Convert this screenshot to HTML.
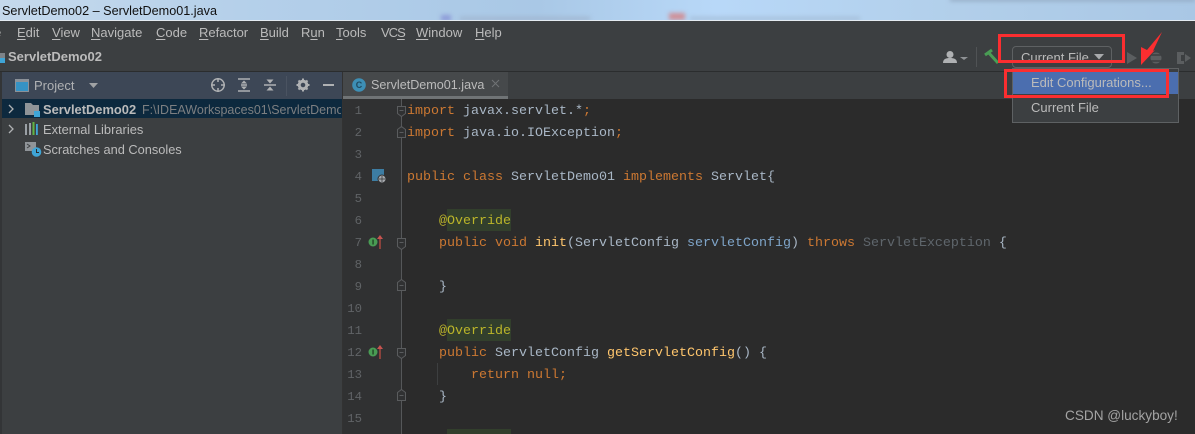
<!DOCTYPE html>
<html><head><meta charset="utf-8">
<style>
html,body{margin:0;padding:0;background:#2b2b2b}
#r{position:relative;width:1195px;height:434px;overflow:hidden;font-family:"Liberation Sans",sans-serif;background:#2b2b2b}
.a{position:absolute}
.bl{filter:blur(2px)}
.t{position:absolute;white-space:pre;line-height:20px}
.m{position:absolute;top:23px;font-size:13px;line-height:20px;color:#bbbbbb;white-space:pre}
.m u{text-underline-offset:2px}
.n{position:absolute;width:28px;left:334px;text-align:right;font:12.3px/22px "Liberation Mono",monospace;color:#606366}
.c{position:absolute;left:407px;font:13.33px/22px "Liberation Mono",monospace;color:#a9b7c6;white-space:pre}
.k{color:#cc7832}.y{color:#ffc66d}.b{color:#7fa5c9}.g{color:#5f666c}
.an{color:#bbb529}
.ah{position:absolute;left:447px;width:64px;height:22px;background:#323f2c}
svg{position:absolute;overflow:visible}
.rb{position:absolute;border:3px solid #fb2e30;box-sizing:border-box}
</style></head><body><div id="r">
<!-- title bar -->
<div class="a" style="left:0;top:0;width:1195px;height:20px;background:linear-gradient(90deg,#c5d9ec 0,#b5d0ea 20%,#a9c8e6 45%,#b8d8f8 60%,#b2cfea 80%,#a9c7e5 100%)"></div>
<div class="a bl" style="left:441px;top:15px;width:10px;height:6px;background:#8d9bd8"></div>
<div class="a bl" style="left:460px;top:17px;width:130px;height:3px;background:#9fb3cc"></div>
<div class="a bl" style="left:669px;top:13px;width:16px;height:7px;background:#cf9097"></div>
<div class="a bl" style="left:690px;top:17px;width:170px;height:3px;background:#a4bcd6"></div>
<div class="a bl" style="left:950px;top:-2px;width:245px;height:3px;background:#8fa5bd"></div>
<div class="t" style="left:2px;top:1px;font-size:12.65px;color:#111;line-height:20px">ServletDemo02 – ServletDemo01.java</div>
<div class="a" style="left:0;top:20px;width:1195px;height:1px;background:#e4ebf1"></div>
<!-- menu + nav -->
<div class="a" style="left:0;top:21px;width:1195px;height:50px;background:#3c3f41"></div>
<div class="m" style="left:-6px">e</div>
<div class="m" style="left:17px"><u>E</u>dit</div>
<div class="m" style="left:52px"><u>V</u>iew</div>
<div class="m" style="left:91px"><u>N</u>avigate</div>
<div class="m" style="left:156px"><u>C</u>ode</div>
<div class="m" style="left:199px"><u>R</u>efactor</div>
<div class="m" style="left:260px"><u>B</u>uild</div>
<div class="m" style="left:301px">R<u>u</u>n</div>
<div class="m" style="left:336px"><u>T</u>ools</div>
<div class="m" style="left:381px;letter-spacing:-1px">VC<u>S</u></div>
<div class="m" style="left:416px"><u>W</u>indow</div>
<div class="m" style="left:475px"><u>H</u>elp</div>
<div class="t" style="left:8px;top:47px;font-size:13px;font-weight:bold;color:#bbbbbb">ServletDemo02</div>
<div class="a" style="left:0;top:53px;width:5px;height:5px;background:#7d8388"></div>
<div class="a" style="left:0;top:58px;width:5px;height:5px;background:#3fa5d6"></div>
<div class="a" style="left:0;top:71px;width:1195px;height:1px;background:#2b2d2e"></div>
<!-- nav toolbar icons -->
<svg style="left:942px;top:50px" width="30" height="16"><circle cx="8" cy="4.500" r="3.500" fill="#afb1b3"/><path d="M1 13c0-4 3-5 7-5s7 1 7 5z" fill="#afb1b3"/><path d="M18 7h8l-4 3z" fill="#8f9295"/></svg>
<div class="a" style="left:976px;top:47px;width:1px;height:20px;background:#505355"></div>
<svg style="left:984px;top:49px" width="18" height="16"><path d="M1 6L8 1M4 3l10 11" stroke="#499c54" stroke-width="3" fill="none"/></svg>
<div class="a" style="left:1012px;top:46px;width:100px;height:22px;box-sizing:border-box;border:1px solid #5e6163;border-radius:4px"></div>
<div class="t" style="left:1021px;top:48px;font-size:13px;color:#bbbbbb">Current File</div>
<svg style="left:1094px;top:54px" width="10" height="6"><path d="M0 0h10l-5 5.500z" fill="#a8aaac"/></svg>
<svg style="left:1126px;top:50px" width="70" height="16"><path d="M1 2l10 6-10 6z" fill="#5b5e60"/><circle cx="30" cy="8" r="5.500" fill="#5b5e60"/><path d="M24 5h12M24 11h12" stroke="#3c3f41" stroke-width="1.500"/><path d="M51 2h7v3h-3v6h3v3h-7z" fill="#5b5e60"/><path d="M59 4l6 4-6 4z" fill="#5b5e60"/></svg>
<!-- left panel -->
<div class="a" style="left:0;top:72px;width:342px;height:362px;background:#3c3f41"></div>
<div class="a" style="left:0;top:72px;width:342px;height:27px;background:#3d4756"></div>
<div class="a" style="left:0;top:72px;width:2px;height:362px;background:#333537"></div>
<svg style="left:15px;top:79px" width="14" height="13"><rect x=".5" y=".5" width="13" height="12" fill="#3592c4" stroke="#8b9198"/><rect x="1" y="1" width="12" height="2" fill="#8b9198"/></svg>
<div class="t" style="left:34px;top:76px;font-size:13px;color:#afb1b3">Project</div>
<svg style="left:89px;top:83px" width="10" height="6"><path d="M0 0h9l-4.500 5z" fill="#a0a2a4"/></svg>
<svg style="left:210px;top:77px" width="126" height="18" fill="none" stroke="#afb1b3">
<circle cx="8" cy="8" r="6.200" stroke-width="1.500"/><path d="M8 1v4M8 11v4M1 8h4M11 8h4" stroke-width="1.500"/>
<path d="M28 2h12M28 14h12M31 8h6" stroke-width="1.500"/><path d="M34 3.500l3 3h-6zM34 12.500l3-3h-6z" fill="#afb1b3" stroke="none"/>
<path d="M54 8h12" stroke-width="1.500"/><path d="M60 6.500l-3.500-4h7zM60 9.500l-3.500 4h7z" fill="#afb1b3" stroke="none"/>
<circle cx="93" cy="8" r="3.800" stroke-width="3"/><path d="M93 1.500v3M93 11.500v3M86.500 8h3M96.500 8h3M88.500 3.500l2 2M95.500 10.500l2 2M97.500 3.500l-2 2M90.500 10.500l-2 2" stroke-width="2"/>
<path d="M113 8h11" stroke-width="2"/></svg>
<div class="a" style="left:286px;top:76px;width:1px;height:20px;background:#4a5361"></div>
<div class="a" style="left:2px;top:99px;width:340px;height:19px;background:#0d293e"></div>
<svg style="left:8px;top:104px" width="8" height="32" fill="none" stroke="#afb1b3" stroke-width="1.300"><path d="M1 1l4 4-4 4M1 21l4 4-4 4"/></svg>
<svg style="left:25px;top:103px" width="16" height="14"><path d="M0 0h6l2 2h6v10H0z" fill="#8f9498"/><rect x="9" y="8" width="6" height="6" fill="#3fa5d6"/></svg>
<div class="t" style="left:43px;top:100px;font-size:12.9px;font-weight:bold;color:#bbbbbb">ServletDemo02</div>
<div class="t" style="left:142px;top:100px;font-size:12.5px;color:#7d7f81;width:199px;overflow:hidden">F:\IDEAWorkspaces01\ServletDemo02</div>
<svg style="left:25px;top:122px" width="15" height="14"><rect x="0" y="2" width="2" height="11" fill="#9aa0a5"/><rect x="4" y="1" width="2" height="12" fill="#9aa0a5"/><rect x="7.500" y="0" width="2" height="13" fill="#62b543"/><rect x="11" y="2" width="1.800" height="11" fill="#40a5d8"/></svg>
<div class="t" style="left:43px;top:120px;font-size:12.9px;color:#bbbbbb">External Libraries</div>
<svg style="left:25px;top:141px" width="16" height="16"><rect x="0" y="1" width="11" height="9" fill="#8f9498"/><path d="M2 3l3 2-3 2" stroke="#3c3f41" fill="none"/><circle cx="11.500" cy="11" r="4.800" fill="#3fa5d6"/><path d="M11.500 8v3.500h2.500" stroke="#2b2b2b" fill="none"/></svg>
<div class="t" style="left:43px;top:140px;font-size:12.8px;color:#bbbbbb">Scratches and Consoles</div>
<!-- tab strip -->
<div class="a" style="left:342px;top:72px;width:853px;height:27px;background:#3c3f41"></div>
<div class="a" style="left:342px;top:72px;width:1px;height:362px;background:#323232"></div>
<div class="a" style="left:343px;top:72px;width:165px;height:27px;background:#46494b"></div>
<div class="a" style="left:343px;top:96px;width:165px;height:3px;background:#707476"></div>
<svg style="left:352px;top:78px" width="14" height="14"><circle cx="7" cy="7" r="6.800" fill="#3d8fb5"/><text x="7" y="10" font-size="9" font-family="Liberation Sans" text-anchor="middle" fill="#1f4a60" font-weight="bold">C</text></svg>
<div class="t" style="left:371px;top:75px;font-size:12.6px;color:#bbbbbb">ServletDemo01.java</div>
<svg style="left:492px;top:80px" width="8" height="8" stroke="#707375" fill="none"><path d="M0 0l7 7M7 0L0 7"/></svg>
<!-- editor -->
<div class="a" style="left:343px;top:99px;width:852px;height:335px;background:#2b2b2b"></div>
<div class="a" style="left:343px;top:99px;width:59px;height:335px;background:#303132"></div>
<div class="a" style="left:401px;top:99px;width:1px;height:335px;background:#555759"></div>
<div class="n" style="top:100px">1</div><div class="n" style="top:122px">2</div><div class="n" style="top:144px">3</div><div class="n" style="top:166px">4</div><div class="n" style="top:188px">5</div><div class="n" style="top:210px">6</div><div class="n" style="top:232px">7</div><div class="n" style="top:254px">8</div><div class="n" style="top:276px">9</div><div class="n" style="top:298px">10</div><div class="n" style="top:320px">11</div><div class="n" style="top:342px">12</div><div class="n" style="top:364px">13</div><div class="n" style="top:386px">14</div><div class="n" style="top:408px">15</div>
<!-- fold marks -->
<svg style="left:396px;top:99px" width="12" height="300" fill="#303132" stroke="#5a5c5e">
<path d="M1.500 7.500h8v7l-4 3-4-3z"/><path d="M3.500 11.500h4"/>
<path d="M1.500 38.500v-8l4-3 4 3v8z"/><path d="M3.500 33.500h4"/>
<path d="M1.500 139.500h8v8l-4 3-4-3z"/><path d="M3.500 143.500h4"/>
<path d="M1.500 191.500v-8l4-3 4 3v8z"/><path d="M3.500 186.500h4"/>
<path d="M1.500 249.500h8v7l-4 3-4-3z"/><path d="M3.500 253.500h4"/>
<path d="M1.500 301.500v-8l4-3 4 3v8z"/><path d="M3.500 296.500h4"/>
</svg>
<!-- gutter icons -->
<svg style="left:372px;top:169px" width="16" height="16"><rect x="0" y="0" width="12" height="12" fill="#3d7da3"/><circle cx="10" cy="10" r="4" fill="#a5a9ad" stroke="#303132"/><path d="M7 10h6M10 7v6" stroke="#303132" stroke-width=".7"/></svg>
<svg style="left:368px;top:236px" width="16" height="14"><circle cx="5" cy="6" r="4.500" fill="#499c54"/><rect x="4.400" y="3.500" width="1.300" height="5" fill="#1f3d22"/><path d="M12 2v11" stroke="#a8483f" stroke-width="1.500"/><path d="M12 -1l3 4H9z" fill="#c75450"/></svg>
<svg style="left:368px;top:346px" width="16" height="14"><circle cx="5" cy="6" r="4.500" fill="#499c54"/><rect x="4.400" y="3.500" width="1.300" height="5" fill="#1f3d22"/><path d="M12 2v11" stroke="#a8483f" stroke-width="1.500"/><path d="M12 -1l3 4H9z" fill="#c75450"/></svg>
<!-- code -->
<div class="ah" style="top:209px"></div>
<div class="ah" style="top:319px"></div>
<div class="ah" style="top:429px"></div>
<div class="c" style="top:101px"><span class="k">import</span> javax.servlet.*<span class="k">;</span></div>
<div class="c" style="top:123px"><span class="k">import</span> java.io.IOException<span class="k">;</span></div>
<div class="c" style="top:167px"><span class="k">public class</span> ServletDemo01 <span class="k">implements</span> Servlet{</div>
<div class="c" style="top:211px">    <span class="an">@Override</span></div>
<div class="c" style="top:233px">    <span class="k">public void</span> <span class="y">init</span>(ServletConfig <span class="b">servletConfig</span>) <span class="k">throws</span> <span class="g">ServletException</span> {</div>
<div class="c" style="top:277px">    }</div>
<div class="c" style="top:321px">    <span class="an">@Override</span></div>
<div class="c" style="top:343px">    <span class="k">public</span> ServletConfig <span class="y">getServletConfig</span>() {</div>
<div class="c" style="top:365px">        <span class="k">return null;</span></div>
<div class="c" style="top:387px">    }</div>
<div class="a" style="left:437px;top:363px;width:1px;height:22px;background:#3d3f40"></div>
<!-- popup -->
<div class="a" style="left:1012px;top:68px;width:167px;height:55px;box-sizing:border-box;border:1px solid #5e6163;background:#3c3f41"></div>
<div class="a" style="left:1013px;top:72px;width:165px;height:22px;background:#4b6eaf"></div>
<div class="t" style="left:1031px;top:73px;font-size:13px;color:#bbbbbb">Edit Configurations...</div>
<div class="t" style="left:1031px;top:98px;font-size:13px;color:#bbbbbb">Current File</div>
<!-- annotations -->
<div class="rb" style="left:998px;top:34px;width:127px;height:29px"></div>
<div class="rb" style="left:1004px;top:69px;width:165px;height:29px"></div>
<svg style="left:1140px;top:32px" width="24" height="36"><path d="M22 0L13 19l2-1L1 33V15l6 3z" fill="#fb2e30"/></svg>
<!-- watermark -->
<div class="t" style="left:1065px;top:406px;font-size:13.6px;color:#a3a3a3">CSDN @luckyboy!</div>
</div></body></html>
